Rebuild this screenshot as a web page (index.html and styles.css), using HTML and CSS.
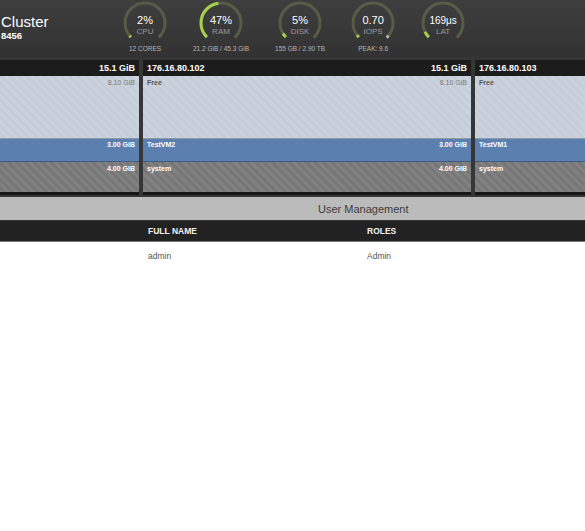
FILE: index.html
```html
<!DOCTYPE html>
<html>
<head>
<meta charset="utf-8">
<link rel="stylesheet" href="styles.css">
</head>
<body>
<div class="page">
  <header class="top">
    <div class="title">
      <div class="name">Cluster</div>
      <div class="ident">8456</div>
    </div>
    <div class="gauges">
      <div class="gauge">
        <div class="dial">
          <svg class="ring" viewBox="0 0 44 44"><circle class="track" cx="22" cy="22" r="20" stroke-dasharray="94.25 200" transform="rotate(135 22 22)"/><circle class="fill" cx="22" cy="22" r="20" stroke-dasharray="1.9 200" transform="rotate(135 22 22)"/></svg>
          <span class="val">2%</span>
          <span class="lbl">CPU</span>
        </div>
        <div class="sub">12 CORES</div>
      </div>
      <div class="gauge">
        <div class="dial">
          <svg class="ring" viewBox="0 0 44 44"><circle class="track" cx="22" cy="22" r="20" stroke-dasharray="94.25 200" transform="rotate(135 22 22)"/><circle class="fill" cx="22" cy="22" r="20" stroke-dasharray="44.3 200" transform="rotate(135 22 22)"/></svg>
          <span class="val">47%</span>
          <span class="lbl">RAM</span>
        </div>
        <div class="sub">21.2 GiB / 45.3 GiB</div>
      </div>
      <div class="gauge">
        <div class="dial">
          <svg class="ring" viewBox="0 0 44 44"><circle class="track" cx="22" cy="22" r="20" stroke-dasharray="94.25 200" transform="rotate(135 22 22)"/><circle class="fill" cx="22" cy="22" r="20" stroke-dasharray="4.7 200" transform="rotate(135 22 22)"/></svg>
          <span class="val">5%</span>
          <span class="lbl">DISK</span>
        </div>
        <div class="sub">155 GB / 2.90 TB</div>
      </div>
      <div class="gauge">
        <div class="dial">
          <svg class="ring" viewBox="0 0 44 44"><circle class="track" cx="22" cy="22" r="20" stroke-dasharray="94.25 200" transform="rotate(135 22 22)"/><circle class="fill" cx="22" cy="22" r="20" stroke-dasharray="2.8 200" transform="rotate(135 22 22)"/><circle class="peak" cx="22" cy="22" r="20" stroke-dasharray="0 91.5 2.75 200" transform="rotate(135 22 22)"/></svg>
          <span class="val">0.70</span>
          <span class="lbl">IOPS</span>
        </div>
        <div class="sub">PEAK: 9.6</div>
      </div>
      <div class="gauge">
        <div class="dial">
          <svg class="ring" viewBox="0 0 44 44"><circle class="track" cx="22" cy="22" r="20" stroke-dasharray="94.25 200" transform="rotate(135 22 22)"/><circle class="fill" cx="22" cy="22" r="20" stroke-dasharray="6.6 200" transform="rotate(135 22 22)"/></svg>
          <span class="val val-sm">169μs</span>
          <span class="lbl">LAT</span>
        </div>
        <div class="sub"></div>
      </div>
    </div>
  </header>

  <section class="hosts">
    <div class="host">
      <div class="host-head"><span></span><span>15.1 GiB</span></div>
      <div class="seg seg-free"><span class="seg-name"></span><span class="seg-size">8.10 GiB</span></div>
      <div class="seg seg-vm"><span class="seg-name"></span><span class="seg-size">3.00 GiB</span></div>
      <div class="seg seg-sys"><span class="seg-name"></span><span class="seg-size">4.00 GiB</span></div>
      <div class="host-foot"></div>
    </div>
    <div class="host">
      <div class="host-head"><span>176.16.80.102</span><span>15.1 GiB</span></div>
      <div class="seg seg-free"><span class="seg-name">Free</span><span class="seg-size">8.10 GiB</span></div>
      <div class="seg seg-vm"><span class="seg-name">TestVM2</span><span class="seg-size">3.00 GiB</span></div>
      <div class="seg seg-sys"><span class="seg-name">system</span><span class="seg-size">4.00 GiB</span></div>
      <div class="host-foot"></div>
    </div>
    <div class="host">
      <div class="host-head"><span>176.16.80.103</span><span></span></div>
      <div class="seg seg-free"><span class="seg-name">Free</span><span class="seg-size"></span></div>
      <div class="seg seg-vm"><span class="seg-name">TestVM1</span><span class="seg-size"></span></div>
      <div class="seg seg-sys"><span class="seg-name">system</span><span class="seg-size"></span></div>
      <div class="host-foot"></div>
    </div>
  </section>

  <div class="band">User Management</div>

  <div class="table">
    <div class="thead">
      <div class="cell">FULL NAME</div>
      <div class="cell">ROLES</div>
    </div>
    <div class="trow">
      <div class="cell">admin</div>
      <div class="cell">Admin</div>
    </div>
  </div>
</div>
</body>
</html>
```

FILE: styles.css
```css
* { box-sizing: border-box; }
html, body { margin: 0; padding: 0; background: #fff; }
body { font-family: "Liberation Sans", Arial, sans-serif; width: 585px; height: 531px; overflow: hidden; }
.page { width: 585px; overflow: hidden; }

.top {
  height: 57px;
  display: flex;
  background: linear-gradient(#3e3e3e, #323232);
}
.title { width: 123px; flex: none; padding-top: 13px; padding-left: 1px; color: #fff; }
.name { font-size: 15px; line-height: 17px; }
.ident { font-size: 9.5px; font-weight: bold; line-height: 11px; }

.gauges { display: flex; gap: 26px; }
.gauge { display: flex; flex-direction: column; align-items: center; min-width: 44px; }
.dial {
  position: relative;
  width: 44px; height: 44px;
  margin-top: 1px;
  display: flex; flex-direction: column; align-items: center;
  padding-top: 13px;
}
.ring { position: absolute; left: 0; top: 0; width: 44px; height: 44px; }
.ring circle { fill: none; stroke-width: 3; }
.ring .track { stroke: #585c47; }
.ring .fill { stroke: #a6cf4b; }
.ring .peak { stroke: #b8b8a8; }
.val { position: relative; color: #fff; font-size: 11px; line-height: 13px; }
.val-sm { font-size: 10px; }
.lbl { position: relative; color: #9a9a9a; font-size: 8px; line-height: 10px; }
.sub { color: #b5b5b5; font-size: 6.5px; line-height: 7px; white-space: nowrap; }

.hosts {
  display: flex;
  gap: 4px;
  margin-left: -189px;
  padding: 3px 0 2px;
  background: #363636;
}
.host { width: 328px; flex: none; display: flex; flex-direction: column; }
.host-head {
  height: 16px;
  background: #1c1c1c;
  color: #fff;
  font-size: 9px;
  font-weight: bold;
  line-height: 16px;
  padding: 0 4px;
  display: flex;
  justify-content: space-between;
}
.seg {
  display: flex;
  justify-content: space-between;
  padding: 3px 4px 0;
  font-size: 7px;
  line-height: 8px;
}
.seg-name { font-weight: bold; }
.seg-free {
  height: 63px;
  border-bottom: 1px solid #8e98a6;
  background: repeating-linear-gradient(45deg, #cad2dd 0 3px, #c5cdd9 3px 6px);
}
.seg-free .seg-name { color: #555; }
.seg-free .seg-size { color: #7a7a7a; }
.seg-vm {
  height: 23px;
  padding-top: 2px;
  border-bottom: 1px solid #3f5c84;
  background: #5b7fae;
  color: #fff;
}
.seg-vm .seg-size, .seg-sys .seg-size { font-weight: bold; }
.seg-sys {
  height: 30px;
  background: repeating-linear-gradient(45deg, #818181 0 3px, #777 3px 6px);
  color: #fff;
}
.host-foot { height: 3px; background: #161616; }

.band {
  height: 24px;
  background: #bbbbbb;
  border-bottom: 1px solid #333;
  color: #3c3c3c;
  font-size: 11px;
  line-height: 24px;
  padding-left: 318px;
}

.thead, .trow {
  display: grid;
  grid-template-columns: 219px 1fr;
  padding-left: 148px;
}
.thead {
  height: 21px;
  background: #222;
  border-bottom: 1px solid #7a7a7a;
  color: #f2f2f2;
  font-size: 8.5px;
  font-weight: bold;
  line-height: 20px;
}
.trow {
  color: #555;
  font-size: 8.5px;
  line-height: 28px;
}
```
